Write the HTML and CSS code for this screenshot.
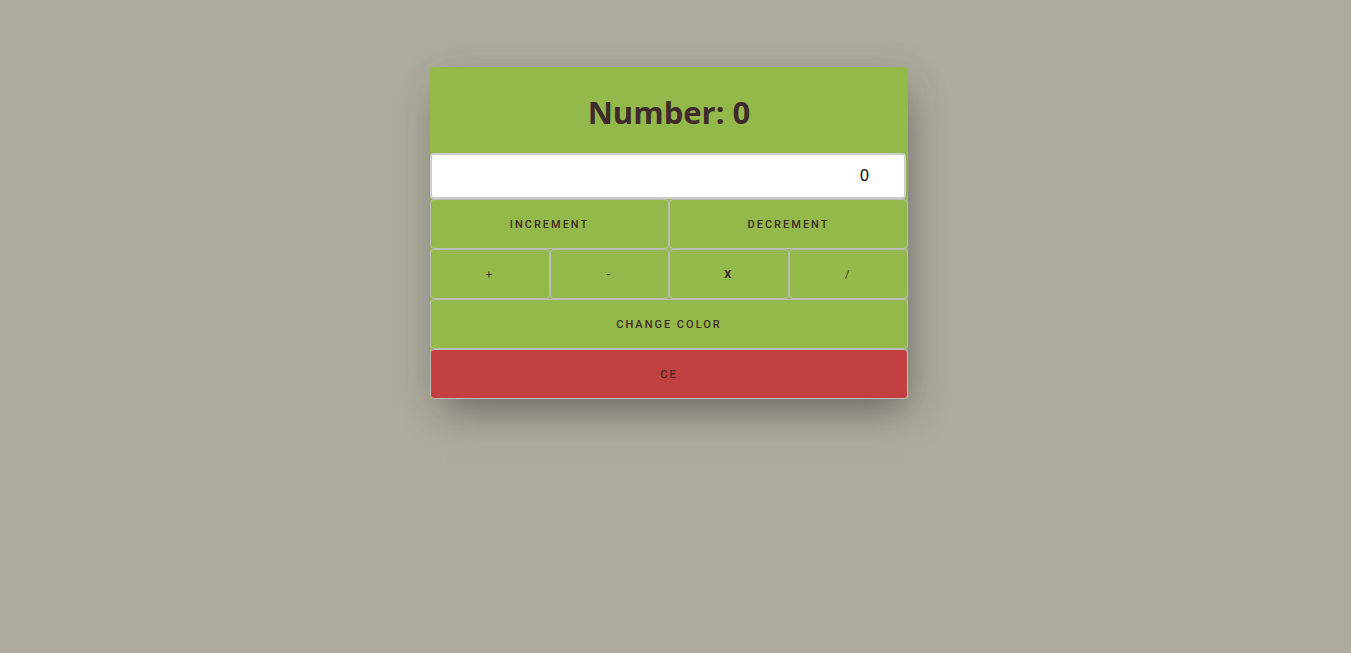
FILE: index.html
```html
<!DOCTYPE html>
<html lang="en">
<head>
<meta charset="utf-8">
<meta name="viewport" content="width=device-width, initial-scale=1">
<title>Number</title>
<link rel="stylesheet" href="styles.css">
</head>
<body>
<main class="page">
  <section class="calculator">
    <h1 class="title">Number: 0</h1>
    <input class="amount" type="text" inputmode="numeric" value="0" aria-label="Amount">
    <div class="keys">
      <button class="key half" type="button">Increment</button>
      <button class="key half" type="button">Decrement</button>
      <button class="key light" type="button">+</button>
      <button class="key" type="button">-</button>
      <button class="key strong" type="button">x</button>
      <button class="key light" type="button">/</button>
      <button class="key full" type="button">Change color</button>
      <button class="key full clear" type="button">CE</button>
    </div>
  </section>
</main>
</body>
</html>
```
FILE: styles.css
```css
* { box-sizing: border-box; }

body {
  margin: 0;
  background: #adab9e;
  color: #412a2c;
  font-family: "Open Sans", "Noto Sans", sans-serif;
}

.page {
  display: flex;
  justify-content: center;
  padding: 67px 13px 67px 0;
}

.calculator {
  display: flex;
  flex-direction: column;
  width: 100%;
  max-width: 478px;
  background: #93b94b;
  box-shadow: 6px 20px 36px -10px rgba(70, 64, 66, 0.56), 4px 8px 36px rgba(70, 64, 54, 0.13);
}

.title {
  margin: 0;
  padding: 21px 0 17px;
  font-size: 31px;
  font-weight: 700;
  line-height: 48px;
  text-align: center;
}

.amount {
  height: 46px;
  margin: 0 2px 0 0;
  padding: 0 35px;
  border: 2px solid #ccc;
  border-radius: 4px;
  background: #fff;
  color: #000;
  font-family: "Liberation Sans", Arial, sans-serif;
  font-size: 16px;
  text-align: right;
}

.keys {
  display: grid;
  grid-template-columns: repeat(4, 1fr);
}

.key {
  height: 50px;
  padding: 0;
  border: 1px solid #bbb;
  border-radius: 4px;
  background: #93b94b;
  color: #412a2c;
  font-family: Roboto, "Liberation Sans", sans-serif;
  font-size: 11px;
  font-weight: 500;
  letter-spacing: 2px;
  text-transform: uppercase;
}

.half { grid-column: span 2; }

.full { grid-column: 1 / -1; }

.strong { font-weight: 700; }

.light { font-weight: 400; }

.clear { background: #c24040; }
```
